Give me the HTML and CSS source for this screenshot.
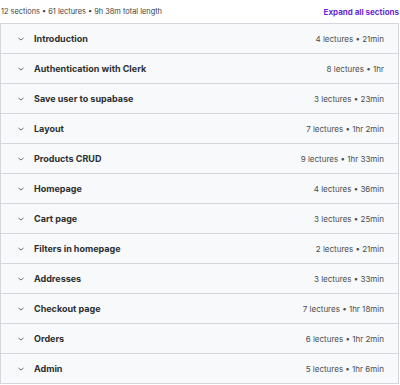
FILE: index.html
```html
<!DOCTYPE html>
<html lang="en">
  <head>
    <meta charset="UTF-8" />
    <title>Course content</title>
    <link rel="stylesheet" href="styles.css">
  </head>
  <body>
    <div id="contentHeader">
      <span class="summary">12 sections • 61 lectures • 9h 38m total length</span>
      <button class="expandAll">Expand all sections</button>
    </div>
    <div id="sectionList">
      <div class="section">
        <svg class="chevron" viewBox="0 0 10 10"><path d="M2.5 4 L5 6 L7.5 4" /></svg>
        <span class="sectionTitle">Introduction</span>
        <span class="sectionMeta">4 lectures • 21min</span>
      </div>
      <div class="section">
        <svg class="chevron" viewBox="0 0 10 10"><path d="M2.5 4 L5 6 L7.5 4" /></svg>
        <span class="sectionTitle">Authentication with Clerk</span>
        <span class="sectionMeta">8 lectures • 1hr</span>
      </div>
      <div class="section">
        <svg class="chevron" viewBox="0 0 10 10"><path d="M2.5 4 L5 6 L7.5 4" /></svg>
        <span class="sectionTitle">Save user to supabase</span>
        <span class="sectionMeta">3 lectures • 23min</span>
      </div>
      <div class="section">
        <svg class="chevron" viewBox="0 0 10 10"><path d="M2.5 4 L5 6 L7.5 4" /></svg>
        <span class="sectionTitle">Layout</span>
        <span class="sectionMeta">7 lectures • 1hr 2min</span>
      </div>
      <div class="section">
        <svg class="chevron" viewBox="0 0 10 10"><path d="M2.5 4 L5 6 L7.5 4" /></svg>
        <span class="sectionTitle">Products CRUD</span>
        <span class="sectionMeta">9 lectures • 1hr 33min</span>
      </div>
      <div class="section">
        <svg class="chevron" viewBox="0 0 10 10"><path d="M2.5 4 L5 6 L7.5 4" /></svg>
        <span class="sectionTitle">Homepage</span>
        <span class="sectionMeta">4 lectures • 36min</span>
      </div>
      <div class="section">
        <svg class="chevron" viewBox="0 0 10 10"><path d="M2.5 4 L5 6 L7.5 4" /></svg>
        <span class="sectionTitle">Cart page</span>
        <span class="sectionMeta">3 lectures • 25min</span>
      </div>
      <div class="section">
        <svg class="chevron" viewBox="0 0 10 10"><path d="M2.5 4 L5 6 L7.5 4" /></svg>
        <span class="sectionTitle">Filters in homepage</span>
        <span class="sectionMeta">2 lectures • 21min</span>
      </div>
      <div class="section">
        <svg class="chevron" viewBox="0 0 10 10"><path d="M2.5 4 L5 6 L7.5 4" /></svg>
        <span class="sectionTitle">Addresses</span>
        <span class="sectionMeta">3 lectures • 33min</span>
      </div>
      <div class="section">
        <svg class="chevron" viewBox="0 0 10 10"><path d="M2.5 4 L5 6 L7.5 4" /></svg>
        <span class="sectionTitle">Checkout page</span>
        <span class="sectionMeta">7 lectures • 1hr 18min</span>
      </div>
      <div class="section">
        <svg class="chevron" viewBox="0 0 10 10"><path d="M2.5 4 L5 6 L7.5 4" /></svg>
        <span class="sectionTitle">Orders</span>
        <span class="sectionMeta">6 lectures • 1hr 2min</span>
      </div>
      <div class="section">
        <svg class="chevron" viewBox="0 0 10 10"><path d="M2.5 4 L5 6 L7.5 4" /></svg>
        <span class="sectionTitle">Admin</span>
        <span class="sectionMeta">5 lectures • 1hr 6min</span>
      </div>
    </div>
  </body>
</html>
```

FILE: styles.css
```css
body {
  margin: 0;
  background-color: #ffffff;
  font-family: Inter, "Liberation Sans", sans-serif;
  color: #2d2f31;
}
#contentHeader {
  display: flex;
  justify-content: space-between;
  align-items: center;
  height: 23px;
  padding: 0 1px;
}
.summary {
  font-size: 7.4px;
  color: #3e4143;
}
.expandAll {
  background: none;
  border: none;
  padding: 0;
  font-family: inherit;
  font-size: 8px;
  font-weight: 700;
  color: #6d28d2;
}
#sectionList {
  width: 397px;
  border: 1px solid #d1d7dc;
  border-bottom: none;
}
.section {
  display: flex;
  align-items: center;
  height: 29px;
  padding: 0 14px 0 15px;
  background-color: #f7f9fa;
  border-bottom: 1px solid #d1d7dc;
}
.chevron {
  width: 10px;
  height: 10px;
  margin-right: 8px;
  fill: none;
  stroke: #6a6f73;
  stroke-width: 1;
}
.sectionTitle {
  flex: 1;
  font-size: 9px;
  font-weight: 700;
  color: #2d2f31;
}
.sectionMeta {
  font-size: 8px;
  color: #4a4d50;
}
```
